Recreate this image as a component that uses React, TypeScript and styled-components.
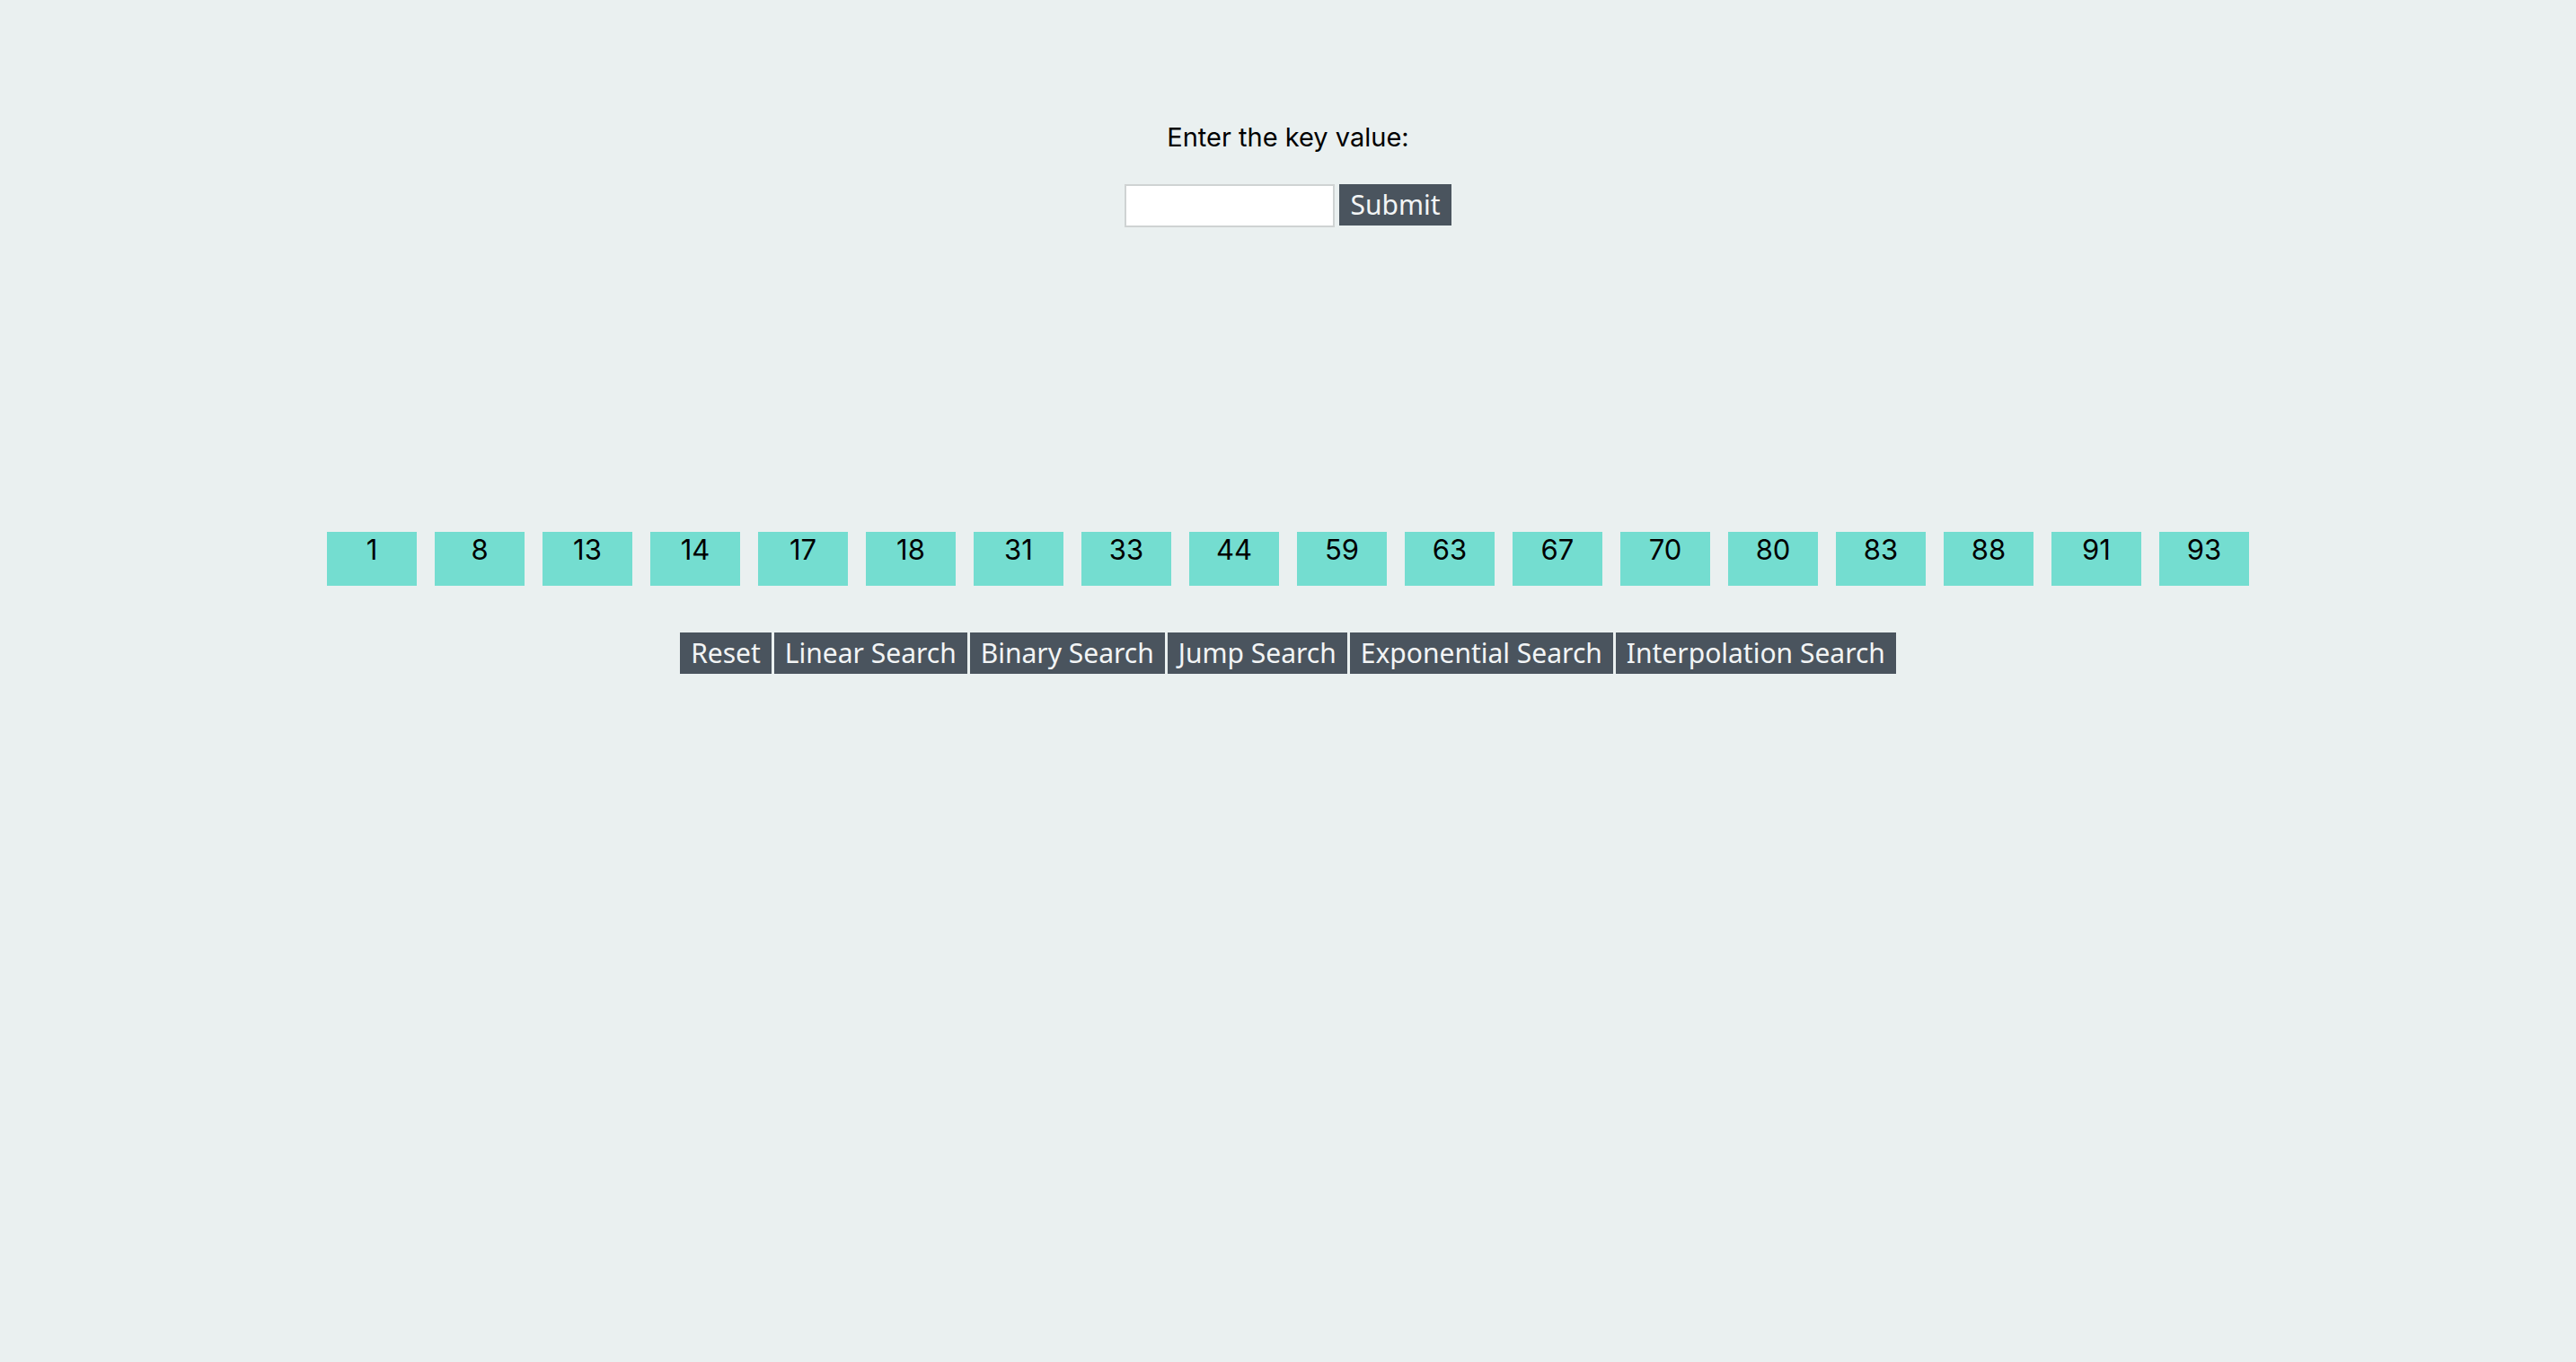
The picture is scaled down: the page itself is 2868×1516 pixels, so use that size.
import React from "react";
import styled, { createGlobalStyle } from "styled-components";

const Global = createGlobalStyle`
  html, body { margin: 0; padding: 0; background: #eaf0f0; }
  body { min-height: 1516px; }
`;

const Page = styled.div`
  width: 2868px;
  min-height: 1516px;
  display: flex;
  flex-direction: column;
  align-items: center;
  font-family: Inter, "Noto Sans", sans-serif;
`;

const Heading = styled.p`
  margin: 133px 0 0;
  font-size: 29px;
  line-height: 40px;
  color: #000;
`;

const Form = styled.form`
  display: flex;
  align-items: flex-start;
  gap: 5px;
  margin-top: 32px;
`;

const Input = styled.input`
  width: 234px;
  height: 48px;
  box-sizing: border-box;
  border: 2px solid #cfd3d3;
  background: #fff;
  margin: 0;
  padding: 0 6px;
`;

const Btn = styled.button`
  box-sizing: border-box;
  height: 46px;
  padding: 0 12px;
  border: none;
  margin: 0;
  background: #4a545e;
  color: #f2f4f5;
  font-family: "Noto Sans", sans-serif;
  font-size: 30px;
  line-height: 46px;
  white-space: nowrap;
`;

const Cells = styled.div`
  display: flex;
  margin-top: 339px;
`;

const Cell = styled.div`
  width: 100px;
  height: 60px;
  margin: 0 10px;
  background: #74ddd0;
  color: #000;
  text-align: center;
  font-size: 31px;
  line-height: 40px;
`;

const Controls = styled.div`
  display: flex;
  gap: 3px;
  margin-top: 52px;
`;

const values = [1, 8, 13, 14, 17, 18, 31, 33, 44, 59, 63, 67, 70, 80, 83, 88, 91, 93];
const actions = ["Reset", "Linear Search", "Binary Search", "Jump Search", "Exponential Search", "Interpolation Search"];

export default function App() {
  return (
    <>
      <Global />
      <Page>
        <Heading>Enter the key value:</Heading>
        <Form onSubmit={(e) => e.preventDefault()}>
          <Input type="text" />
          <Btn type="submit">Submit</Btn>
        </Form>
        <Cells>
          {values.map((v) => (
            <Cell key={v}>{v}</Cell>
          ))}
        </Cells>
        <Controls>
          {actions.map((a) => (
            <Btn key={a} type="button">{a}</Btn>
          ))}
        </Controls>
      </Page>
    </>
  );
}
